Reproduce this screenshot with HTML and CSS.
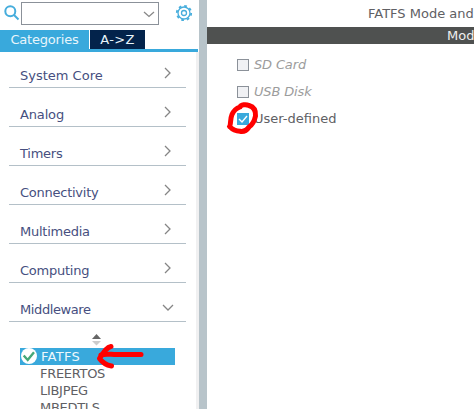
FILE: index.html
```html
<!DOCTYPE html>
<html lang="en">
<head>
<meta charset="utf-8">
<title>FATFS Mode and Configuration</title>
<link rel="stylesheet" href="styles.css">
</head>
<body>
<div class="app">
  <aside class="sidebar">
    <div class="toolbar">
      <svg class="search-icon" width="16" height="16" viewBox="0 0 16 16"><circle cx="6.300" cy="6.300" r="5"/><path d="M10 10l4.500 4.500"/></svg>
      <div class="combo"><svg width="12" height="7" viewBox="0 0 12 7"><path d="M1 1l5 4.500L11 1"/></svg></div>
      <svg class="gear" width="18" height="18" viewBox="0 0 18 18"><circle cx="9" cy="9" r="7.200" class="teeth"/><circle cx="9" cy="9" r="6"/><circle cx="9" cy="9" r="2.500"/></svg>
    </div>
    <div class="tabs"><div class="tab active">Categories</div><div class="tab">A-&gt;Z</div></div>
    <div class="tab-line"></div>
    <div class="panel">
      <div class="group"><span>System Core</span><svg width="8" height="12" viewBox="0 0 8 12"><path d="M1 1l5 5-5 5"/></svg></div>
      <div class="group"><span>Analog</span><svg width="8" height="12" viewBox="0 0 8 12"><path d="M1 1l5 5-5 5"/></svg></div>
      <div class="group snug"><span>Timers</span><svg width="8" height="12" viewBox="0 0 8 12"><path d="M1 1l5 5-5 5"/></svg></div>
      <div class="group snug"><span>Connectivity</span><svg width="8" height="12" viewBox="0 0 8 12"><path d="M1 1l5 5-5 5"/></svg></div>
      <div class="group snug"><span>Multimedia</span><svg width="8" height="12" viewBox="0 0 8 12"><path d="M1 1l5 5-5 5"/></svg></div>
      <div class="group snug"><span>Computing</span><svg width="8" height="12" viewBox="0 0 8 12"><path d="M1 1l5 5-5 5"/></svg></div>
      <div class="group open"><span>Middleware</span><svg width="12" height="8" viewBox="0 0 12 8"><path d="M1 1l5 5 5-5"/></svg></div>
      <svg class="sorter" width="9" height="12" viewBox="0 0 9 12"><path d="M4.500 0L9 5H0z" fill="#666"/><path d="M0 7h9l-4.500 4.500z" fill="#ccc"/></svg>
      <div class="list">
        <div class="item selected"><svg width="16" height="16" viewBox="0 0 16 16"><circle cx="8" cy="8" r="8" fill="#fff"/><path d="M2.700 7.500l4 4.500 6.300-7.800" fill="none" stroke="#45a878" stroke-width="2.400"/></svg><span>FATFS</span></div>
        <div class="item">FREERTOS</div>
        <div class="item">LIBJPEG</div>
        <div class="item">MBEDTLS</div>
      </div>
    </div>
  </aside>
  <div class="splitter"></div>
  <main class="main">
    <div class="title">FATFS Mode and</div>
    <div class="mode">Mod</div>
    <div class="options">
      <div class="option disabled"><i class="box"></i><span>SD Card</span></div>
      <div class="option disabled"><i class="box"></i><span>USB Disk</span></div>
      <div class="option"><i class="box checked"><svg width="12" height="12" viewBox="0 0 12 12"><path d="M2 6l3 3 5-6"/></svg></i><span>User-defined</span></div>
    </div>
  </main>
  <svg class="marks" width="474" height="409" viewBox="0 0 474 409">
    <path d="M229.500 126.500C231 125 230 119 232 114.500C234 110 237 108 240 107C241 104.500 246 104 249 105.500C254 107 256 110 255.500 116C254 123 252 125 249 127C247 130 244 132 240 131.300C235 131 232 129 229.500 126.500"/>
    <path d="M141 354.500H119C112 355 106 353 101 355"/>
    <path d="M111 346.500C106 347.500 104 352 99.500 358.500C102 362 106 365 111.500 366"/>
  </svg>
</div>
</body>
</html>
```
FILE: styles.css
```css
* { box-sizing: border-box; }
body { margin: 0; background: #fff; font: 13px/17px "DejaVu Sans", sans-serif; color: #606064; overflow: hidden; }
svg { display: block; flex: none; }
.app { position: relative; display: flex; width: 474px; height: 409px; overflow: hidden; white-space: nowrap; }
.sidebar { width: 199px; flex: none; }
.toolbar { display: flex; height: 30px; padding: 2px 0 0 4px; }
.search-icon { margin: 3px 1px 0 0; fill: none; stroke: #46addc; stroke-width: 2; }
.combo { width: 138px; height: 23px; border: 1px solid #8b9199; padding: 8px 0 0 121px; }
.combo svg { fill: none; stroke: #888; stroke-width: 1.3; }
.gear { margin: 2px 0 0 16px; fill: none; stroke: #46addc; stroke-width: 1.3; }
.gear .teeth { stroke-width: 1.8; stroke-dasharray: 2.7 2.955; }
.tabs { display: flex; gap: 1px; height: 19px; color: #e8f5fb; }
.tab { width: 55px; background: #03234b; padding-top: 1px; text-align: center; letter-spacing: 0.3px; }
.tab.active { width: 89px; background: #39a9dc; letter-spacing: -0.2px; }
.tab-line { width: 198px; height: 3px; background: #39a9dc; }
.panel { height: 357px; border-right: 3px solid #f0f0f1; padding: 0 10px 0 9px; overflow: hidden; }
.group { display: flex; justify-content: space-between; height: 39px; border-bottom: 1px solid #b4c0c8; padding: 18px 14px 0 11px; color: #464f80; letter-spacing: -0.15px; }
.group:first-child { height: 36px; padding-top: 15px; letter-spacing: 0; }
.group.snug { letter-spacing: -0.25px; }
.group svg { fill: none; stroke: #858585; stroke-width: 1.3; }
.group.open { padding-right: 12px; letter-spacing: -0.4px; }
.group.open svg { margin-top: 3px; }
.sorter { margin: 12px 0 0 83px; }
.list { width: 155px; margin: 2px 0 0 11px; }
.item { height: 17px; padding-left: 20px; letter-spacing: -0.3px; }
.selected { display: flex; gap: 4px; padding-left: 1px; background: #39a9dc; color: #eef8fc; letter-spacing: 0.3px; }
.splitter { width: 8px; flex: none; background: #b8c4ca; }
.main { flex: 1; min-width: 0; }
.title { height: 27px; padding: 5px 0 0 161px; }
.mode { height: 17px; background: #4f5150; color: #eee; padding-left: 240px; }
.options { padding: 13px 0 0 30px; }
.option { display: flex; gap: 5px; height: 27px; align-items: flex-start; }
.option span { margin-top: -1px; }
.disabled { color: #9c9c9c; font-style: italic; letter-spacing: -0.15px; }
.box { width: 12px; height: 12px; margin-top: 2px; border: 1px solid #8b9199; background: #f0f1f4; }
.box.checked { border: 0; background: #39a9dc; }
.box path { fill: none; stroke: #fff; stroke-width: 1.4; }
.marks { position: absolute; left: 0; top: 0; fill: none; stroke: #f00; stroke-width: 5; stroke-linecap: round; stroke-linejoin: round; }
```
